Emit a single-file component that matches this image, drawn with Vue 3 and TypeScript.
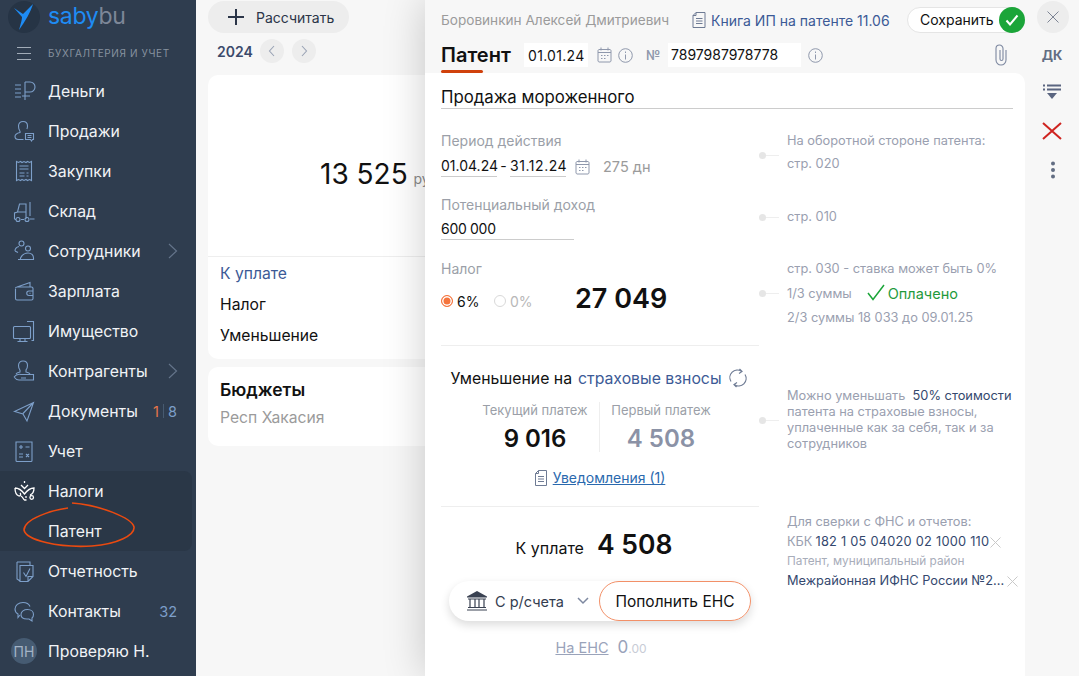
<script setup lang="ts">
interface NavItem { label: string; icon: string; chevron?: boolean; count?: string; sub?: boolean; active?: boolean }
const nav: NavItem[] = [
  { label: 'Деньги', icon: 'M3 6h6M3 10h6M3 14h6M3 18h6M13 3v18M13 3h5a5 5 0 0 1 0 10h-5M10 17h8' },
  { label: 'Продажи', icon: 'M8 12c-1-1-1.500-3-1.500-5 0-3 2-4.500 4.500-4.500s4.500 1.500 4.500 4.500c0 1-.2 2-.6 3M8 12v1.500c-3 .7-5 1.800-5 4 0 2 1.500 3 3.500 3h5M13.500 14.500h8v6h-1l-1 1.500-1-1.500h-5zM15.500 16.500h4M15.500 18.500h4' },
  { label: 'Закупки', icon: 'M4.500 2.500l2 1 2-1 1.500 1 2-1 2 1 1.500-1 2 1 2-1v19l-2-1-2 1-1.500-1-2 1-2-1-1.500 1-2-1-2 1zM7.500 7h9M7.500 10h9M7.500 14h5M14.500 14h2M7.500 17h5M14.500 17h2' },
  { label: 'Склад', icon: 'M2.500 20v-6l3-1 2-8h6.500v15M5.500 13h8.500M18 3v14M18 20h4.500M9 20.500h3M2.500 20.500h1M8 20.500a2 2 0 1 1-4 0 2 2 0 1 1 4 0zM17 20.500a2 2 0 1 1-4 0 2 2 0 1 1 4 0z' },
  { label: 'Сотрудники', icon: 'M12 4.500a2.500 2.500 0 1 1-5 0 2.500 2.500 0 1 1 5 0zM18.500 9.500a2.500 2.500 0 1 1-5 0 2.500 2.500 0 1 1 5 0zM3 12c0-2.500 2-4 4-4.500M3 12l3 1.500M8.500 20.500h13v-1.500c0-3-2-5-5.500-5s-6 2-7.500 5zM8 20.500h-2' },
  { label: 'Зарплата', icon: 'M3.500 10v9.500a1.500 1.500 0 0 0 1.500 1.500h14.500a1.500 1.500 0 0 0 1.500-1.500v-10a1.500 1.500 0 0 0-1.500-1.500h-14.500a1.500 1.500 0 0 0-1.500 1.500M5 8l13-4.500V8M21 12h-4a2 2 0 0 0 0 4.500h4M17.500 14.200h1' },
  { label: 'Имущество', icon: 'M2.500 7.500h15a1 1 0 0 1 1 1v10a1 1 0 0 1-1 1h-15a1 1 0 0 1-1-1v-10a1 1 0 0 1 1-1zM8 19.500v2.500M13 19.500v2.500M5.500 22.500h10M15 2.500h6.500v19h-2' },
  { label: 'Контрагенты', icon: 'M8 11c-1-1-1.500-2.500-1.500-4.500 0-3 2-4.500 4.500-4.500s4.500 1.500 4.500 4.500c0 2-.5 3.500-1.500 4.500v2c2 .5 3.500 1 4 2M8 11v2c-2 .5-3.500 1-4 2M2 18c2-2.500 5-3 7-2.500h4M2 18c1.500 2 3 3 5 3h14.500v-5.500h-9M9 19h5' },
  { label: 'Документы', icon: 'M2.500 12.500l19-9-6.500 18.500-4-7zM11 14.500L21.500 3.500', count: '1|8' },
  { label: 'Учет', icon: 'M4 3h16v18.500a1 1 0 0 1-1 1H5a1 1 0 0 1-1-1zM7 8h4M9 6v4M13.500 8h4M7 15h4M7 18h4M14 15l3 3M17 15l-3 3' },
  { label: 'Налоги', active: true, icon: 'M12.500 2v2M9 6l3.500 3.500L16 6M3 9c3 0 6.500 2 9.500 6 3-4 6.500-6 9.500-6 0 4-1 6-4 7M3 9c0 4 1 7 4 8 2 0 2-2 1-3M9 17c2 1 2 3 3.500 4h2M14 17v2M21.500 18.500a1.800 1.800 0 1 1-3.600 0 1.800 1.800 0 1 1 3.600 0z' },
  { label: 'Патент', sub: true, icon: '' },
  { label: 'Отчетность', icon: 'M5 3h13v3M5 3v17l3 2M8 6.500h13v11l-5 5H8zM11.500 13.500l2.500 4 4-8M16 22v-4.500h5' },
  { label: 'Контакты', icon: 'M8 16l-2 2.500v-3.500c-2-1-3-3-3-5 0-3.500 3.500-6.500 8-6.500 3.500 0 6 1.500 7 4M9 15.500c0-3 3-5 6.500-5s6 2 6 5c0 1.500-.5 2.800-1.500 3.500v3l-3-2h-2c-3.500 0-6-1.800-6-4.500z', count: '32' },
]
</script>

<template>
  <div class="app">
    <aside class="side">
      <div class="logo">
        <span class="logo-disc">
          <svg width="24" height="28" viewBox="0 0 24 28"><path class="logo-arrow" d="M2 5 L11 11 L21 1 C19 8 13 19 7 27 C9 20 10 16 10 14 Z" /></svg>
        </span>
        <span class="logo-word"><i>saby</i><b>bu</b></span>
      </div>
      <div class="section">
        <svg class="burger" width="14" height="14" viewBox="0 0 14 14"><path d="M0 1.500h14M0 7.500h14M0 13.500h14" /></svg>
        <span>БУХГАЛТЕРИЯ И УЧЕТ</span>
      </div>
      <nav class="nav">
        <template v-for="(item, i) in nav" :key="item.label">
          <div v-if="item.active" class="group">
            <div class="row">
              <svg class="ico white" width="24" height="24" viewBox="0 0 24 24"><path :d="item.icon" /></svg>
              <span class="lbl">{{ item.label }}</span>
            </div>
            <div class="row">
              <span class="ico-space"></span>
              <span class="lbl">{{ nav[i + 1].label }}</span>
            </div>
          </div>
          <div v-else-if="!item.sub" class="row">
            <svg class="ico" width="24" height="24" viewBox="0 0 24 24"><path :d="item.icon" /></svg>
            <span class="lbl">{{ item.label }}</span>
            <svg v-if="i === 4 || i === 7" class="chev" width="10" height="16" viewBox="0 0 10 16"><path d="M1 1l7.500 7L1 15" /></svg>
            <span v-if="item.count === '1|8'" class="count"><em>1</em><u></u>8</span>
            <span v-else-if="item.count" class="count">{{ item.count }}</span>
          </div>
        </template>
        <div class="row">
          <span class="avatar">ПН</span>
          <span class="lbl">Проверяю Н.</span>
        </div>
      </nav>
      <svg class="scribble" width="116" height="48" viewBox="0 0 116 48"><path d="M46 6C30 8 2 17 2 28 4 38 36 46 70 44 96 42 113 33 112 25 110 16 78 3 50 1" /></svg>
    </aside>

    <main class="main">
      <button class="calc"><svg width="16" height="16" viewBox="0 0 16 16"><path d="M8 0v16M0 8h16" /></svg><span>Рассчитать</span></button>
      <div class="year">
        <b>2024</b>
        <span class="round"><svg width="8" height="12" viewBox="0 0 8 12"><path d="M6 1L1.500 6 6 11" /></svg></span>
        <span class="round"><svg width="8" height="12" viewBox="0 0 8 12"><path d="M2 1l4.500 5L2 11" /></svg></span>
      </div>
      <section class="card summary">
        <div class="total">13 525 <small>руб</small></div>
        <div class="lines">
          <div class="blue">К уплате</div>
          <div>Налог</div>
          <div>Уменьшение</div>
        </div>
      </section>
      <section class="card budget">
        <h3>Бюджеты</h3>
        <p>Респ Хакасия</p>
      </section>
    </main>

    <div class="panel">
      <div class="panel-col">
        <header class="head">
          <div class="head-top">
            <span class="owner">Боровинкин Алексей Дмитриевич</span>
            <a class="book">
              <svg width="14" height="16" viewBox="0 0 14 16"><path d="M4 .5h9v15H1V3.500zM4 .5v3H1M4 6.500h6.500M4 9h6.500M4 11.500h6.500" /></svg>
              Книга ИП на патенте 11.06
            </a>
            <button class="save">
              <span>Сохранить</span>
              <span class="ok"><svg width="14" height="12" viewBox="0 0 14 12"><path d="M1.500 6.500L5 10.500 12.500 1.500" /></svg></span>
            </button>
          </div>
          <div class="head-bottom">
            <div class="tab">Патент</div>
            <span class="box date">01.01.24</span>
            <svg class="gi cal" width="15" height="16" viewBox="0 0 15 16"><path d="M2 2.500h11a1.500 1.500 0 0 1 1 1v10.500a1.500 1.500 0 0 1-1 1H2a1.500 1.500 0 0 1-1-1V3.500a1.500 1.500 0 0 1 1-1zM4 .5v3M11 .5v3M1 5.500h13M4 8.500h1.500M7 8.500h1.500M10 8.500h1.500M4 11.500h1.500M7 11.500h1.500" /></svg>
            <svg class="gi inf" width="15" height="15" viewBox="0 0 15 15"><circle cx="7.500" cy="7.500" r="6.800" /><path d="M7.500 6.500v5M7.500 3.500v1.500" /></svg>
            <span class="num">№</span>
            <span class="box patent">7897987978778</span>
            <svg class="gi inf2" width="15" height="15" viewBox="0 0 15 15"><circle cx="7.500" cy="7.500" r="6.800" /><path d="M7.500 6.500v5M7.500 3.500v1.500" /></svg>
            <svg class="clip" width="14" height="22" viewBox="0 0 14 22"><path d="M12 6v10a5 5 0 0 1-10 0V4.500a3.500 3.500 0 0 1 7 0V15a1.500 1.500 0 0 1-3 0V6" /></svg>
          </div>
        </header>

        <div class="sheet">
          <div class="title">Продажа мороженного</div>

          <div class="sec sec-a">
            <div class="left">
              <div class="cap">Период действия</div>
              <div class="dates">
                <span class="under">01.04.24</span><span class="dash">-</span><span class="under wide">31.12.24</span>
                <svg class="gi cal2" width="15" height="16" viewBox="0 0 15 16"><path d="M2 2.500h11a1.500 1.500 0 0 1 1 1v10.500a1.500 1.500 0 0 1-1 1H2a1.500 1.500 0 0 1-1-1V3.500a1.500 1.500 0 0 1 1-1zM4 .5v3M11 .5v3M1 5.500h13M4 8.500h1.500M7 8.500h1.500M10 8.500h1.500M4 11.500h1.500M7 11.500h1.500" /></svg>
                <span class="days">275 дн</span>
              </div>
            </div>
            <span class="conn c-a"></span>
            <div class="note">
              <div>На оборотной стороне патента:</div>
              <div class="gap">стр. 020</div>
            </div>
          </div>

          <div class="sec sec-b">
            <div class="left">
              <div class="cap">Потенциальный доход</div>
              <div class="income">600 000</div>
            </div>
            <span class="conn c-b"></span>
            <div class="note n-b">стр. 010</div>
          </div>

          <div class="sec sec-c">
            <div class="left">
              <div class="cap">Налог</div>
              <div class="tax">
                <span class="radio on"></span><span class="r-t">6%</span>
                <span class="radio"></span><span class="r-t off">0%</span>
                <b class="tax-sum">27 049</b>
              </div>
            </div>
            <span class="conn c-c"></span>
            <div class="note">
              <div>стр. 030 - ставка может быть 0%</div>
              <div class="paid">1/3 суммы
                <svg width="18" height="17" viewBox="0 0 18 17"><path d="M1 9l5 6.500L17 1" /></svg>
                <span>Оплачено</span>
              </div>
              <div class="rest">2/3 суммы 18 033 до 09.01.25</div>
            </div>
          </div>

          <div class="sec sec-d">
            <div class="left mid">
              <div class="reduce">Уменьшение на <span>страховые взносы</span>
                <svg width="20" height="20" viewBox="0 0 20 20"><path d="M3 13.500A7.500 7.500 0 0 1 13.500 3.300M17 6.500A7.500 7.500 0 0 1 6.500 16.700M11.500 1l2.500 2.500-3 2M8.500 19L6 16.500l3-2" /></svg>
              </div>
              <div class="pays">
                <div class="pay"><span>Текущий платеж</span><b>9 016</b></div>
                <div class="pay muted"><span>Первый платеж</span><b>4 508</b></div>
              </div>
              <div class="notices">
                <svg width="12" height="16" viewBox="0 0 12 16"><path d="M3.500.5h8v15H.5V3.500zM3.500.5v3h-3M3 6.500h6M3 9h6M3 11.500h6" /></svg>
                <a>Уведомления (1)</a>
              </div>
            </div>
            <span class="conn c-d"></span>
            <div class="note tight">
              Можно уменьшать&nbsp; <span class="dark">50% стоимости</span><br>патента на страховые взносы,<br>уплаченные как за себя, так и за<br>сотрудников
            </div>
          </div>

          <div class="sec sec-e">
            <div class="left mid">
              <div class="due"><span>К уплате</span><b>4 508</b></div>
              <div class="pill">
                <span class="source">
                  <svg width="20" height="20" viewBox="0 0 20 20"><path class="fill" d="M10 0l10 5.500v1H0v-1z" /><path class="bars" d="M1 8h18M3 8v8.500M8 8v8.500M12 8v8.500M17 8v8.500M1 16.500h18M0 19h20" /></svg>
                  С р/счета
                  <svg class="down" width="12" height="8" viewBox="0 0 12 8"><path d="M1 1l5 5 5-5" /></svg>
                </span>
                <span class="top-up">Пополнить ЕНС</span>
              </div>
              <div class="ens"><a>На ЕНС</a><b>0<small>.00</small></b></div>
            </div>
            <span></span>
            <div class="note check">
              <div>Для сверки с ФНС и отчетов:</div>
              <div class="kv">КБК <span class="dark kbk">182 1 05 04020 02 1000 110</span><svg class="x" width="11" height="11" viewBox="0 0 11 11"><path d="M.5.5l10 10M10.500.5l-10 10" /></svg></div>
              <div class="tiny">Патент, муниципальный район</div>
              <div class="kv"><span class="dark">Межрайонная ИФНС России №2...</span><svg class="x x2" width="11" height="11" viewBox="0 0 11 11"><path d="M.5.5l10 10M10.500.5l-10 10" /></svg></div>
            </div>
          </div>
        </div>
      </div>

      <div class="rail">
        <button class="close"><svg width="12" height="12" viewBox="0 0 12 12"><path d="M.5.5l11 11M11.500.5l-11 11" /></svg></button>
        <b class="dk">ДК</b>
        <svg class="filter" width="20" height="16" viewBox="0 0 20 16"><path d="M1 1.500h2M5 1.500h14M1 5.500h2M5 5.500h14" /><path class="fill" d="M5 9h10l-5 6z" /></svg>
        <svg class="cross" width="20" height="18" viewBox="0 0 20 18"><path d="M1 1l18 16M19 1L1 17" /></svg>
        <svg class="dots" width="6" height="18" viewBox="0 0 6 18"><circle cx="3" cy="2.500" r="2" /><circle cx="3" cy="9" r="2" /><circle cx="3" cy="15.500" r="2" /></svg>
      </div>
    </div>
  </div>
</template>

<style>
html, body { margin: 0; overflow: hidden; }
</style>

<style scoped>
* { box-sizing: border-box; }
.app { position: relative; display: flex; width: 1079px; height: 676px; overflow: hidden; background: #f7f7f7; font-family: Inter, "Liberation Sans", sans-serif; font-size: 14px; color: #111; }
svg { display: block; flex: none; fill: none; }
button { border: 0; padding: 0; font: inherit; color: inherit; }

.side { position: relative; flex: none; width: 196px; height: 676px; background: #2f3d4f; color: #f1f3f6; }
.logo { display: flex; align-items: center; height: 33px; padding-left: 8px; gap: 8px; }
.logo-disc { display: flex; align-items: center; justify-content: center; width: 32px; height: 32px; border-radius: 50%; background: #263445; }
.logo-arrow { fill: #1e8cf5; }
.logo-word { font-size: 23px; line-height: 33px; letter-spacing: -.3px; }
.logo-word i { font-style: normal; color: #1e8cf5; }
.logo-word b { font-weight: 400; color: #7d8798; }
.section { display: flex; align-items: center; height: 38px; padding: 1px 0 0 17px; gap: 17px; font-size: 10px; letter-spacing: .62px; color: #87929f; white-space: nowrap; }
.burger path { stroke: #a2acb8; stroke-width: 1; }
.nav { display: flex; flex-direction: column; }
.row { display: flex; align-items: center; height: 40px; padding-left: 12px; gap: 12px; font-size: 15.800px; }
.ico path { stroke: #7d9fc9; stroke-width: 1.1; }
.ico.white path { stroke: #fff; stroke-width: 1.3; }
.ico-space { width: 24px; }
.lbl { white-space: nowrap; }
.group { width: 192px; height: 80px; background: #2a3747; border-radius: 0 8px 8px 0; }
.chev { margin-left: auto; margin-right: 18px; }
.chev path { stroke: #64748a; stroke-width: 1.2; }
.count { display: flex; align-items: center; margin-left: auto; margin-right: 19px; font-size: 14.500px; color: #7d9fc9; }
.count em { font-style: normal; color: #e8764a; }
.count u { width: 1px; height: 14px; margin: 0 4px 0 4px; background: #475a70; }
.avatar { display: flex; align-items: center; justify-content: center; width: 26px; height: 26px; margin-left: -1px; margin-right: -1px; border-radius: 50%; background: #465b72; color: #a3b3c6; font-size: 14px; }
.scribble { position: absolute; left: 22px; top: 502px; }
.scribble path { stroke: #ea4a10; stroke-width: 1.6; }

.main { flex: none; width: 229px; padding: 1px 0 0 12px; overflow: hidden; }
.calc { display: flex; align-items: center; gap: 12px; width: 141px; height: 32px; padding-left: 20px; border-radius: 16px; background: #ededed; font-size: 14px; color: #2b3548; }
.calc path { stroke: #2b3548; stroke-width: 2; }
.year { display: flex; align-items: center; height: 24px; margin: 6px 0 0 9px; gap: 8px; color: #3b4a6b; font-size: 14px; }
.year b { width: 35px; font-weight: 600; }
.round { display: flex; align-items: center; justify-content: center; width: 24px; height: 24px; border-radius: 50%; background: #ededed; }
.round path { stroke: #9aa3b5; stroke-width: 1.100; }
.card { width: 400px; margin-bottom: 8px; background: #fff; border-radius: 10px; }
.summary { height: 284px; margin-top: 12px; display: flex; flex-direction: column; }
.total { height: 182px; padding: 80px 0 0 112px; border-bottom: 1px solid #eee; font-size: 28px; line-height: 38px; white-space: nowrap; }
.total small { font-size: 14px; margin-left: -2px; color: #8a8a8a; }
.lines { padding: 1px 0 0 12px; font-size: 15.700px; line-height: 31px; }
.blue { color: #3c5a96; }
.budget { height: 79px; padding: 12px; }
.budget h3 { margin: 0; font-size: 17.500px; line-height: 22px; font-weight: 600; }
.budget p { margin: 7px 0 0; font-size: 15.700px; line-height: 20px; color: #9b9b9b; }

.panel { position: absolute; left: 425px; top: 0; right: 0; bottom: 0; display: flex; background: #f7f7f7; box-shadow: 0 0 40px rgba(0, 0, 0, .2); }
.panel-col { display: flex; flex-direction: column; width: 600px; }
.head { height: 73px; padding-left: 16px; }
.head-top { display: flex; align-items: center; height: 40px; }
.owner { width: 251px; font-size: 13.600px; color: #9b9b9b; white-space: nowrap; }
.book { display: flex; align-items: center; gap: 5px; width: 215px; color: #3c5a96; font-size: 14px; white-space: nowrap; }
.book path { stroke: #6e7b94; stroke-width: 1; }
.save { display: flex; align-items: center; justify-content: space-between; width: 117px; height: 26px; margin-top: -1px; padding-left: 12px; border: 1px solid #e5e5e5; border-radius: 13px; background: #fff; font-size: 14px; }
.ok { display: flex; align-items: center; justify-content: center; width: 26px; height: 26px; margin-right: -2px; border-radius: 50%; background: #1ba539; }
.ok path { stroke: #fff; stroke-width: 2; }
.head-bottom { position: relative; display: flex; align-items: center; height: 33px; }
.tab { position: relative; height: 33px; width: 83px; font-size: 20px; font-weight: 600; line-height: 30px; }
.tab::after { content: ""; position: absolute; left: 0; bottom: 0; width: 42px; height: 3px; border-radius: 2px; background: #d0410c; z-index: 1; }
.box { display: flex; align-items: center; height: 24px; background: #fff; font-size: 14px; white-space: nowrap; }
.date { width: 64px; padding-left: 4px; margin-top: -3px; letter-spacing: .3px; }
.patent { width: 133px; padding-left: 3px; margin: -4px 0 0 8px; }
.gi circle, .gi path { stroke: #8f98ac; stroke-width: 1; }
.cal { margin: -3px 0 0 9px; }
.inf { margin: -3px 0 0 6px; }
.inf2 { margin: -3px 0 0 7px; }
.num { width: 14px; margin: -3px 0 0 13px; color: #8f98ac; font-weight: 600; font-size: 13px; }
.clip { margin: -3px 0 0 171px; }
.clip path { stroke: #7d88a0; stroke-width: 1.100; }

.sheet { flex: 1; min-height: 0; padding-left: 16px; background: #fff; border-radius: 0 10px 0 0; }
.title { width: 572px; height: 36px; padding-top: 12px; border-bottom: 1px solid #ccc; font-size: 16.800px; line-height: 24px; white-space: nowrap; }
.sec { position: relative; display: grid; grid-template-columns: 318px 28px 1fr; }
.left { min-width: 0; }
.cap { color: #9b9fa8; line-height: 20px; font-size: 14px; }
.note { color: #9aa0b0; font-size: 12.800px; line-height: 20px; white-space: nowrap; }
.dark { color: #34486e; }
.conn { position: relative; display: block; width: 20px; height: 1px; background: #eee; }
.conn::before { content: ""; position: absolute; left: 0; top: -3px; width: 7px; height: 7px; border-radius: 50%; background: #e6e6e6; }

.sec-a { height: 86px; padding-top: 22px; }
.dates { display: flex; align-items: center; margin-top: 5px; font-size: 14px; line-height: 20px; }
.under { width: 56px; border-bottom: 1px solid #ccc; white-space: nowrap; }
.under.wide { letter-spacing: .55px; }
.dash { width: 13px; text-align: center; margin-top: -2px; }
.cal2 { margin: 0 13px 0 9px; }
.days { color: #9b9b9b; font-size: 14.500px; }
.c-a { margin-top: 24px; }
.note .gap { margin-top: 3px; }

.sec-b { height: 64px; }
.income { width: 133px; margin-top: 4px; border-bottom: 1px solid #ccc; font-size: 14px; line-height: 20px; letter-spacing: -.3px; }
.c-b { margin-top: 22px; }
.n-b { margin-top: 12px; }

.sec-c { height: 87px; }
.sec-c::after, .sec-d::after { content: ""; position: absolute; left: 0; bottom: 0; width: 318px; height: 1px; background: #eee; }
.tax { display: flex; align-items: center; height: 36px; margin-top: 4px; }
.radio { width: 12px; height: 12px; border: 1px solid #d9d9d9; border-radius: 50%; }
.radio.on { border: 1px solid #f5743d; background: #f5743d; box-shadow: inset 0 0 0 1.500px #fff; }
.r-t { width: 41px; padding-left: 4px; font-size: 14px; }
.r-t.off { width: 69px; color: #b8b8b8; }
.tax-sum { margin-bottom: 6px; font-size: 27px; font-weight: 600; }
.c-c { margin-top: 34px; }
.paid { display: flex; align-items: center; height: 30px; }
.paid svg { margin: -3px 3px 0 15px; }
.paid path { stroke: #1ba539; stroke-width: 1.500; }
.paid span { color: #1f9a3c; font-size: 14.500px; }
.rest { margin-top: -1px; }

.sec-d { height: 161px; padding-top: 21px; }
.mid { display: flex; flex-direction: column; align-items: center; }
.reduce { display: flex; align-items: center; height: 22px; margin-left: -2px; font-size: 15.800px; white-space: nowrap; }
.reduce span { margin-left: 6px; color: #3c5a96; }
.reduce svg { margin-left: 6px; }
.reduce path { stroke: #6e7b94; stroke-width: 1.200; }
.pays { display: flex; height: 50px; margin: 13px 0 0 -6px; }
.pay { display: flex; flex-direction: column; align-items: center; width: 127px; }
.pay + .pay { width: 124px; border-left: 1px solid #eee; }
.pay span { color: #9b9fa8; font-size: 13px; line-height: 16px; white-space: nowrap; }
.pay b { margin-top: 6px; font-size: 24px; line-height: 30px; font-weight: 600; }
.muted b { color: #8b92a6; }
.notices { display: flex; align-items: center; gap: 6px; margin-top: 17px; font-size: 14px; }
.notices path { stroke: #6e7b94; stroke-width: 1; }
.notices a { color: #2a69ae; text-decoration: underline; }
.c-d { margin-top: 53px; }
.tight { padding-top: 21px; line-height: 16px; }

.sec-e { height: 169px; }
.due { display: flex; align-items: center; height: 36px; margin: 19px 12px 0 0; gap: 13px; font-size: 16px; }
.due span { padding-top: 8px; }
.due b { font-size: 26.500px; font-weight: 600; }
.pill { display: flex; align-items: center; justify-content: space-between; width: 302px; height: 40px; margin-top: 19px; border-radius: 20px; background: #fff; box-shadow: 0 4px 10px rgba(0, 0, 0, .14); }
.source { display: flex; align-items: center; gap: 8px; padding-left: 18px; font-size: 14.500px; color: #333d4f; white-space: nowrap; }
.source .fill { fill: #3a4252; }
.source .bars { stroke: #3a4252; stroke-width: 1.200; }
.down { margin-left: 5px; }
.down path { stroke: #7d88a0; stroke-width: 1.500; }
.top-up { display: flex; align-items: center; justify-content: center; width: 152px; height: 40px; border: 1px solid #f29068; border-radius: 20px; background: #fff; font-size: 15.500px; white-space: nowrap; }
.ens { display: flex; align-items: baseline; gap: 9px; margin: 16px 0 0 2px; font-size: 14.500px; color: #9aa3ba; }
.ens a { text-decoration: underline; }
.ens b { font-weight: 400; font-size: 17px; }
.ens small { font-size: 12px; font-weight: 400; color: #c8ccd6; }
.check { padding-top: 5px; }
.kv { display: flex; align-items: center; }
.kbk { margin-left: 3px; letter-spacing: .24px; }
.tiny { font-size: 11.800px; line-height: 19px; color: #a8adba; }
.x { margin-left: 1px; }
.x path { stroke: #c9c9c9; stroke-width: 1; }
.x2 { margin-left: 3px; }

.rail { position: relative; display: flex; flex-direction: column; align-items: center; flex: 1; }
.close { display: flex; align-items: center; justify-content: center; width: 32px; height: 32px; margin-top: 1px; margin-right: -2px; border-radius: 50%; background: #ededed; }
.close path { stroke: #7d8494; stroke-width: 1; }
.dk { margin-top: 14px; font-size: 13px; font-weight: 700; color: #626d82; line-height: 16px; }
.filter { margin-top: 21px; }
.filter path { stroke: #5a6580; stroke-width: 2; }
.filter .fill { fill: #5a6580; stroke: none; }
.cross { margin-top: 22px; }
.cross path { stroke: #cf2420; stroke-width: 2; }
.dots { margin: 21px 0 0 2px; fill: #626d82; }
</style>
